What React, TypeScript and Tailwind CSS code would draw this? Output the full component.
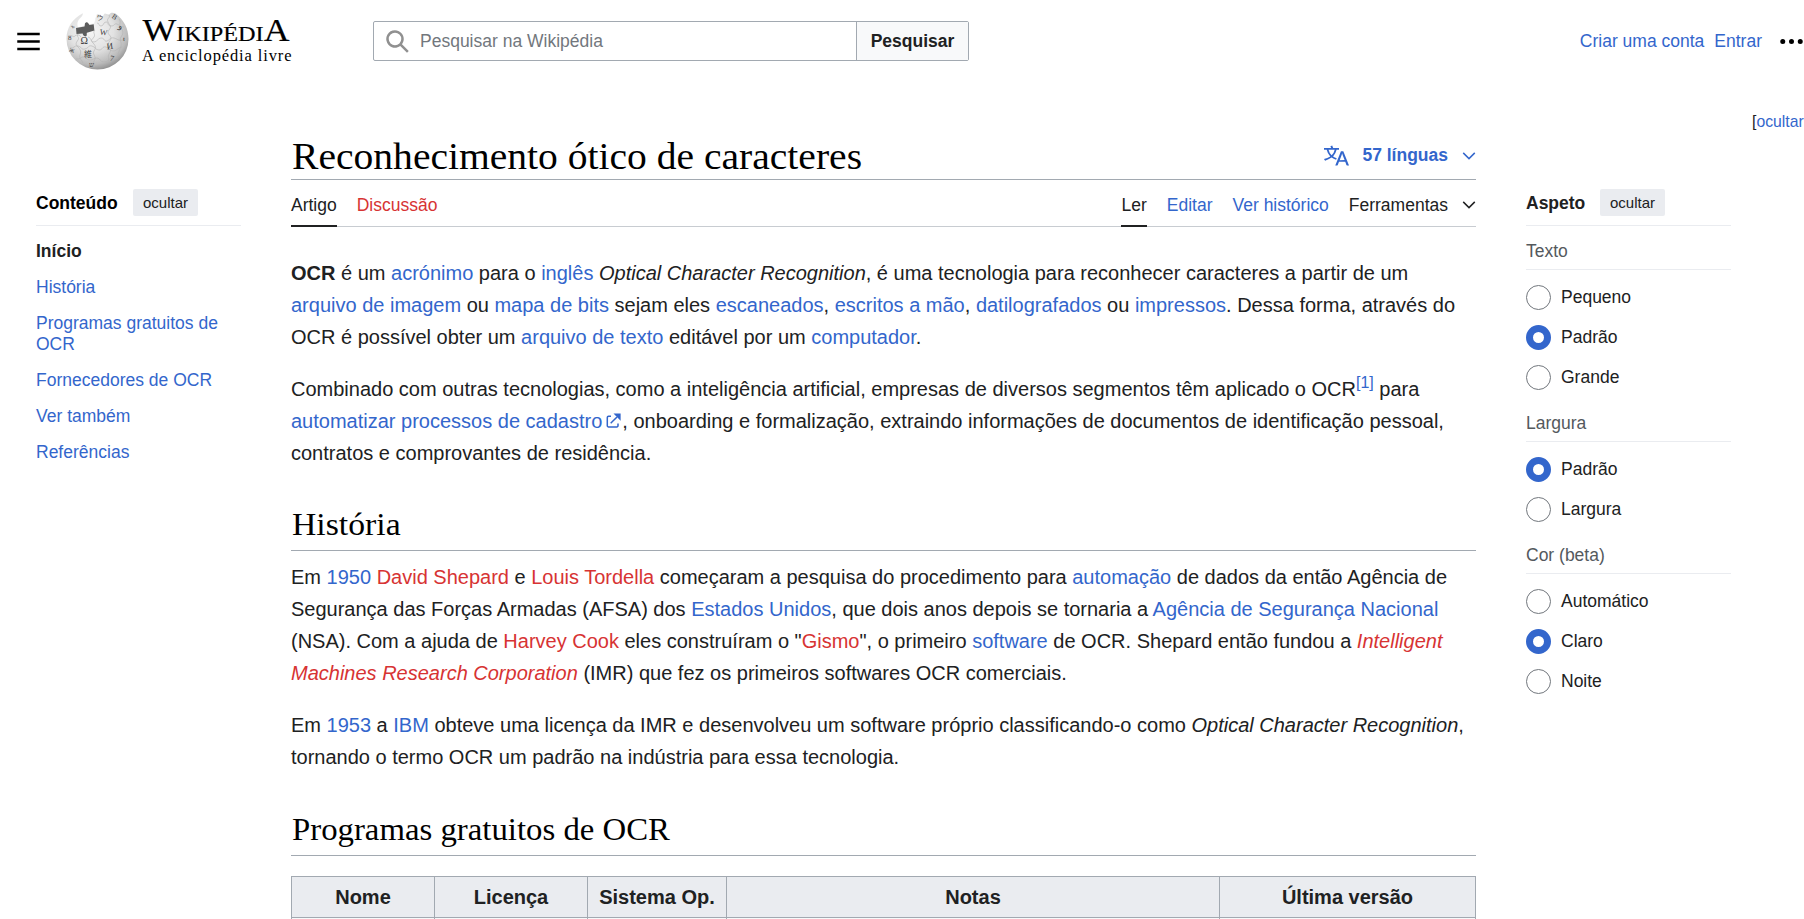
import type { ReactNode } from "react";

function A({ children }: { children: ReactNode }) {
  return <a className="text-[#3366cc]">{children}</a>;
}

function Red({ children }: { children: ReactNode }) {
  return <a className="text-[#d73333]">{children}</a>;
}

function Icon({ d, className }: { d: string; className: string }) {
  return (
    <svg viewBox="0 0 20 20" fill="currentColor" className={className}>
      <path d={d} />
    </svg>
  );
}

const ICONS = {
  menu: "M1 3v2h18V3zm0 8h18V9H1zm0 6h18v-2H1z",
  search: "M12.2 13.6a7 7 0 1 1 1.4-1.4l5.4 5.4-1.4 1.4zM3 8a5 5 0 1 0 10 0A5 5 0 0 0 3 8",
  ellipsis: "M1 10a2 2 0 1 0 4 0a2 2 0 1 0-4 0zM8 10a2 2 0 1 0 4 0a2 2 0 1 0-4 0zM15 10a2 2 0 1 0 4 0a2 2 0 1 0-4 0z",
  chevron: "m17.5 4.75-7.5 7.5-7.5-7.5L1 6.25l9 9 9-9z",
  language:
    "M20 18h-1.44a.6.6 0 0 1-.4-.12.8.8 0 0 1-.23-.31L17 15h-5l-1 2.54a.8.8 0 0 1-.22.3.6.6 0 0 1-.4.14H9l4.55-11.47h1.89zm-3.53-4.31L14.89 9.5a12 12 0 0 1-.39-1.24q-.09.37-.19.69l-.19.56-1.58 4.19zm-6.3-1.58a13.4 13.4 0 0 1-2.91-1.41 11.46 11.46 0 0 0 2.81-5.37H12V4H7.31a4 4 0 0 0-.2-.56C6.87 2.79 6.6 2 6.6 2l-1.47.5s.4.89.6 1.5H0v1.33h2.15A11.23 11.23 0 0 0 5 10.7a17.2 17.2 0 0 1-5 2.1q.56.82.87 1.38a23.3 23.3 0 0 0 5.22-2.51 15.6 15.6 0 0 0 3.56 1.77zM3.63 5.33h4.91a8.1 8.1 0 0 1-2.45 4.45 9.1 9.1 0 0 1-2.46-4.45",
};

function Globe() {
  return (
    <svg viewBox="0 0 64 60" className="h-[60px] w-16">
      <defs>
        <radialGradient id="ball" cx="0.4" cy="0.32" r="0.72">
          <stop offset="0" stopColor="#f6f6f6" />
          <stop offset="0.5" stopColor="#e2e2e2" />
          <stop offset="0.82" stopColor="#bababa" />
          <stop offset="1" stopColor="#8a8a8a" />
        </radialGradient>
      </defs>
      <path
        d="M16.8 3.2C6.5 8.5.5 17.5.5 29a31 30.5 0 0 0 62 0c0-10.5-4.500-19-13-25.500-2-.9-4.500-1.500-5.500.3-1.800 1.500-3.500-.2-5-.2-1.700.5-1 2.800-3 2.600-1.500-.6-2.600-2.700-4.600-2.200-1.500.6-.4 3-2 4 .2 2.500-1.200 4.200-1.200 5.200l-9.500 2-6.800 2.200c-1-3.200-.5-6.400 1.500-8.500 2.800-2.200 3.500-4 3.400-5.700z"
        fill="url(#ball)"
      />
      <path
        d="M10 18l8.500-1.600c.8-1.800-.4-3.100 1.400-4 2.200-.5 2.500 1.500 3.600 2.500l4.200-.6.700 6.300-7.500 2.200c-.7 1.200.7 2.600-.9 3.500-2 .5-3-1.400-3.400-2.800l-6.100.5z"
        fill="#5c5c5c"
      />
      <g fill="none" stroke="#b2b2b2" strokeWidth="0.600">
        <path d="M31 13c3 0 1 3 4 3s2-4 5-4 1 4 5 4 3-3 6-2 3 3 7 3" />
        <path d="M2 26c4-2 5 2 7 0s5-1 6 1M22 27c4 1 2 5 6 5s3-4 7-4 3 4 6 3 3-4 7-3 5 4 12 1" />
        <path d="M4 38c4 1 4-3 8-2s3 4 7 3 3-4 7-3 3 4 7 4 3-4 7-3 3 4 7 4 4-3 9-4" />
        <path d="M10 49c4 1 5-3 8-2s3 3 6 3 4-2 7-2 3 4 7 4 5-4 9-4 3 1 5 0" />
        <path d="M29 20c-3 3 1 4-1 7s-4 3-1 6 3 5 1 8 2 5 1 8-3 4 0 8M43 5c2 3-3 3-1 7s4 4 1 8 2 5 2 8-4 4-2 8 2 5 0 8 1 4-1 8M12 24c-2 3 2 3 0 6s-3 4 0 7 3 5 2 8 1 4 3 8M53 9c3 4-1 5 2 9s2 6 0 9 1 5 0 9-3 6-3 10" />
      </g>
      <g fill="#3b3b3b" fontFamily="Liberation Serif, serif" fontSize="9">
        <text x="14.500" y="34" fontSize="10">Ω</text>
        <text x="34" y="25" fontSize="8" transform="rotate(8 38 22)">W</text>
        <text x="40.500" y="39" fontSize="9" transform="rotate(-8 44 36)">И</text>
        <text x="18" y="47" fontSize="8" fontFamily="Noto Sans CJK JP, sans-serif">維</text>
        <text x="44" y="51" transform="rotate(12 46 48)" fontSize="8">7</text>
        <text x="30" y="10" fontSize="7" transform="rotate(15 33 8)">ウ</text>
        <text x="46" y="9" fontSize="7" transform="rotate(35 48 7)">B</text>
        <text x="53" y="19" fontSize="8" transform="rotate(20 55 17)">و</text>
        <text x="57" y="31" fontSize="7">t</text>
        <text x="2" y="30" fontSize="7">8</text>
        <text x="3.500" y="42" fontSize="7" transform="rotate(20 5 40)">ж</text>
        <text x="5" y="18" fontSize="6" transform="rotate(-25 7 16)">ъ</text>
        <text x="23" y="57" fontSize="7">ש</text>
      </g>
    </svg>
  );
}

function Wordmark() {
  return (
    <svg viewBox="0 0 152 60" className="h-[60px] w-[152px]" fontFamily="Liberation Serif, serif">
      <text x="0.500" y="31" fontSize="31" textLength="147" lengthAdjust="spacingAndGlyphs" stroke="#000" strokeWidth="0.200">
        W<tspan fontSize="21">IKIPÉDI</tspan>A
      </text>
      <text x="0" y="50.500" fontSize="16.500" textLength="149.500">
        A enciclopédia livre
      </text>
    </svg>
  );
}

function Header() {
  return (
    <header className="flex h-[82px] shrink-0 pl-[16px] text-[17.500px]">
      <Icon d={ICONS.menu} className="mt-[29px] size-[25px] text-black" />
      <div className="ml-[25px] mt-[10px] flex gap-[12px]">
        <Globe />
        <Wordmark />
      </div>
      <div className="ml-[79px] mt-[21px] flex h-10 w-[596px] rounded-[2px] border border-[#a2a9b1]">
        <div className="flex flex-1 items-center pl-[11px]">
          <Icon d={ICONS.search} className="size-[25px] text-[#909090]" />
          <span className="ml-[10px] text-[#72777d]">Pesquisar na Wikipédia</span>
        </div>
        <button className="w-[112px] border-l border-[#a2a9b1] bg-[#f8f9fa] font-bold text-[#202122]">Pesquisar</button>
      </div>
      <nav className="ml-auto mt-[29px] flex h-[25px] items-center whitespace-nowrap">
        <A>Criar uma conta</A>
        <span className="ml-[10px]">
          <A>Entrar</A>
        </span>
        <Icon d={ICONS.ellipsis} className="ml-[17px] size-[25px] text-black" />
      </nav>
    </header>
  );
}

function PanelHead({ title, className }: { title: string; className: string }) {
  return (
    <div className="flex h-[37px] border-b border-[#eaecf0]">
      <span className={className}>{title}</span>
      <button className="h-[27px] w-[65px] rounded-[2px] bg-[#eaecf0] pt-px text-[15px] leading-[26px]">ocultar</button>
    </div>
  );
}

const TOC = ["História", "Programas gratuitos de OCR", "Fornecedores de OCR", "Ver também", "Referências"];

function Contents() {
  return (
    <aside className="w-[205px] pt-[68px] text-[17.500px]">
      <PanelHead title="Conteúdo" className="w-[97px] font-bold leading-[29px] text-black" />
      <ul className="mt-[15px] leading-[21px]">
        <li className="pb-[15px] font-bold">Início</li>
        {TOC.map((t) => (
          <li key={t} className="pb-[15px]">
            <A>{t}</A>
          </li>
        ))}
      </ul>
    </aside>
  );
}

const GROUPS = [
  { title: "Texto", options: ["Pequeno", "Padrão", "Grande"], on: 1 },
  { title: "Largura", options: ["Padrão", "Largura"], on: 0 },
  { title: "Cor (beta)", options: ["Automático", "Claro", "Noite"], on: 1 },
];

function Appearance() {
  return (
    <aside className="w-[205px] pt-[68px] text-[17.500px]">
      <PanelHead title="Aspeto" className="w-[74px] font-bold leading-[29px]" />
      {GROUPS.map((g) => (
        <section key={g.title}>
          <h3 className="h-[44px] border-b border-[#eaecf0] pt-[15px] leading-[21px] text-[#54595d]">{g.title}</h3>
          <div className="flex flex-col gap-[15px] pb-[8px] pt-[15px]">
            {g.options.map((o, i) => (
              <label key={o} className="flex h-[25px] gap-[10px]">
                <span
                  className={
                    i === g.on
                      ? "size-[25px] rounded-full border-[7px] border-[#3366cc]"
                      : "size-[25px] rounded-full border border-[#72777d]"
                  }
                />
                <span className="leading-[24px]">{o}</span>
              </label>
            ))}
          </div>
        </section>
      ))}
    </aside>
  );
}

function H2({ children, stretch }: { children: ReactNode; stretch: string }) {
  return (
    <h2 className="h-[52px] border-b border-[#a2a9b1] pl-px font-['Liberation_Serif',serif] text-[31.500px] leading-[52px] text-black">
      <span className={`inline-block origin-left whitespace-nowrap ${stretch}`}>{children}</span>
    </h2>
  );
}

function Article() {
  return (
    <main className="w-[1185px] text-[20px] leading-8">
      <div className="mt-[50px] flex h-[48px] justify-between border-b border-[#a2a9b1]">
        <h1 className="origin-left scale-x-[1.041] whitespace-nowrap pl-px font-['Liberation_Serif',serif] text-[38px] leading-[49px] text-black">
          Reconhecimento ótico de caracteres
        </h1>
        <div className="flex h-[47px] items-center text-[17.500px] font-bold text-[#3366cc]">
          <Icon d={ICONS.language} className="size-[25px]" />
          <span className="mb-[2px] ml-[13px]">57 línguas</span>
          <Icon d={ICONS.chevron} className="ml-[14px] size-[14px]" />
        </div>
      </div>
      <div className="flex h-[47px] items-stretch border-b border-[#c8ccd1] text-[17.500px] leading-[50px]">
        <span className="h-[47px] border-b-2 border-[#202122]">Artigo</span>
        <span className="ml-5">
          <Red>Discussão</Red>
        </span>
        <span className="ml-auto h-[47px] border-b-2 border-[#202122]">Ler</span>
        <span className="ml-5">
          <A>Editar</A>
        </span>
        <span className="ml-5">
          <A>Ver histórico</A>
        </span>
        <span className="ml-5">Ferramentas</span>
        <Icon d={ICONS.chevron} className="ml-[14px] mt-[18px] size-[14px]" />
      </div>

      <div className="whitespace-nowrap pt-[30px]">
        <p>
          <b>OCR</b> é um <A>acrónimo</A> para o <A>inglês</A> <i>Optical Character Recognition</i>, é uma tecnologia para
          reconhecer caracteres a partir de um
          <br />
          <A>arquivo de imagem</A> ou <A>mapa de bits</A> sejam eles <A>escaneados</A>, <A>escritos a mão</A>,{" "}
          <A>datilografados</A> ou <A>impressos</A>. Dessa forma, através do
          <br />
          OCR é possível obter um <A>arquivo de texto</A> editável por um <A>computador</A>.
        </p>
        <p className="mt-5">
          Combinado com outras tecnologias, como a inteligência artificial, empresas de diversos segmentos têm aplicado o
          OCR
          <sup className="text-[16px] leading-none">
            <A>[1]</A>
          </sup>{" "}
          para
          <br />
          <A>
            automatizar processos de cadastro
            <svg viewBox="0 0 16 16" className="ml-[3px] mr-px inline-block size-[16px] align-[-1px]">
              <path d="M6 3.200H3.500a1.200 1.200 0 0 0-1.200 1.200v8.300a1.200 1.200 0 0 0 1.200 1.200h8.300a1.200 1.200 0 0 0 1.200-1.200V10.500M5.700 10.300L12 4" fill="none" stroke="currentColor" strokeWidth="1.500" />
              <path d="M8.500.600H15.600V7.700z" fill="currentColor" />
            </svg>
          </A>
          , onboarding e formalização, extraindo informações de documentos de identificação pessoal,
          <br />
          contratos e comprovantes de residência.
        </p>
      </div>

      <div className="mt-[30px]">
        <H2 stretch="scale-x-[1.070]">História</H2>
      </div>
      <div className="whitespace-nowrap pt-[10px]">
        <p>
          Em <A>1950</A> <Red>David Shepard</Red> e <Red>Louis Tordella</Red> começaram a pesquisa do procedimento para{" "}
          <A>automação</A> de dados da então Agência de
          <br />
          Segurança das Forças Armadas (AFSA) dos <A>Estados Unidos</A>, que dois anos depois se tornaria a{" "}
          <A>Agência de Segurança Nacional</A>
          <br />
          (NSA). Com a ajuda de <Red>Harvey Cook</Red> eles construíram o "<Red>Gismo</Red>", o primeiro <A>software</A> de
          OCR. Shepard então fundou a{" "}
          <i>
            <Red>Intelligent</Red>
          </i>
          <br />
          <i>
            <Red>Machines Research Corporation</Red>
          </i>{" "}
          (IMR) que fez os primeiros softwares OCR comerciais.
        </p>
        <p className="mt-5">
          Em <A>1953</A> a <A>IBM</A> obteve uma licença da IMR e desenvolveu um software próprio classificando-o como{" "}
          <i>Optical Character Recognition</i>,
          <br />
          tornando o termo OCR um padrão na indústria para essa tecnologia.
        </p>
      </div>

      <div className="mt-[31px]">
        <H2 stretch="scale-x-[1.041]">Programas gratuitos de OCR</H2>
      </div>
      <table className="mt-5 w-[1184px] table-fixed border-collapse">
        <colgroup>
          <col className="w-[143px]" />
          <col className="w-[153px]" />
          <col className="w-[139px]" />
          <col className="w-[493px]" />
          <col className="w-[256px]" />
        </colgroup>
        <thead>
          <tr className="h-[41px] bg-[#eaecf0]">
            {["Nome", "Licença", "Sistema Op.", "Notas", "Última versão"].map((t) => (
              <th key={t} className="whitespace-nowrap border border-[#a2a9b1] p-0 text-center font-bold">
                {t}
              </th>
            ))}
          </tr>
        </thead>
        <tbody>
          <tr className="h-[41px] bg-[#f8f9fa]">
            {[0, 1, 2, 3, 4].map((n) => (
              <td key={n} className="border border-[#a2a9b1]" />
            ))}
          </tr>
        </tbody>
      </table>
    </main>
  );
}

export default function App() {
  return (
    <div className="flex h-[919px] w-[1804px] flex-col overflow-hidden bg-white font-['Liberation_Sans',Arial,sans-serif] text-[#202122]">
      <Header />
      <div className="flex h-0 justify-end">
        <div className="mt-[28px] h-[24px] w-[52px] whitespace-nowrap text-[15.750px] leading-[24px]">
          [<A>ocultar</A>
        </div>
      </div>
      <div className="flex gap-[50px] pl-9">
        <div className="pt-[39px]">
          <Contents />
        </div>
        <Article />
        <div className="pt-[39px]">
          <Appearance />
        </div>
      </div>
    </div>
  );
}
